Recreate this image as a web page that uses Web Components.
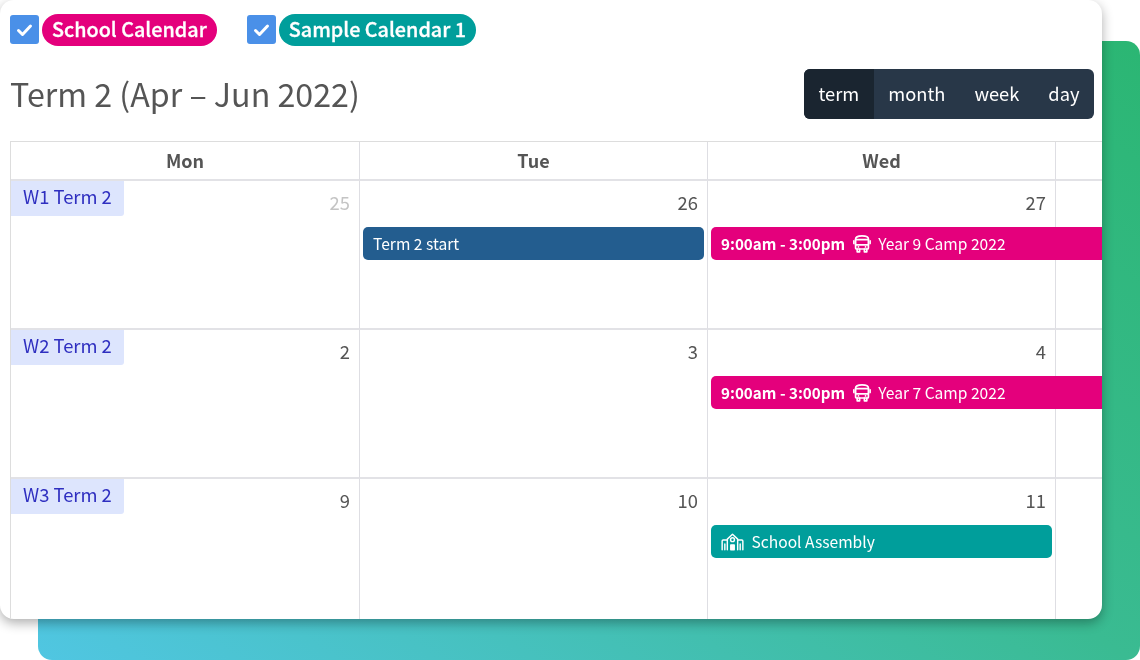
<!DOCTYPE html>
<html>
<head>
<meta charset="utf-8">
<title>Term calendar</title>
<style>
  html, body { margin: 0; background: #fff; overflow: hidden; }
  body { font-family: "Noto Sans CJK SC", "Open Sans", sans-serif; color: #555; }
</style>
</head>
<body>
<term-stage>
  <cal-card>
    <legend-item slot="legend" color="#e4007c">School Calendar</legend-item>
    <legend-item slot="legend" color="#009e9b">Sample Calendar 1</legend-item>
    <span slot="title">Term 2 (Apr – Jun 2022)</span>
    <view-switch slot="views" active="term" views="term,month,week,day"></view-switch>
    <cal-grid slot="grid">
      <cal-head>Mon</cal-head><cal-head>Tue</cal-head><cal-head>Wed</cal-head><cal-head></cal-head>

      <cal-day num="25" muted week="W1 Term 2"></cal-day>
      <cal-day num="26"><cal-event color="#235d8f">Term 2 start</cal-event></cal-day>
      <cal-day num="27"><cal-event color="#e4007c" time="9:00am - 3:00pm" icon="bus" open>Year 9 Camp 2022</cal-event></cal-day>
      <cal-day></cal-day>

      <cal-day num="2" week="W2 Term 2"></cal-day>
      <cal-day num="3"></cal-day>
      <cal-day num="4"><cal-event color="#e4007c" time="9:00am - 3:00pm" icon="bus" open>Year 7 Camp 2022</cal-event></cal-day>
      <cal-day></cal-day>

      <cal-day num="9" week="W3 Term 2"></cal-day>
      <cal-day num="10"></cal-day>
      <cal-day num="11"><cal-event color="#009e9b" icon="school">School Assembly</cal-event></cal-day>
      <cal-day></cal-day>
    </cal-grid>
  </cal-card>
</term-stage>

<script>
const ICONS = {
  bus: `<svg width="18" height="18" viewBox="0 0 18 18" fill="none" stroke="currentColor" stroke-width="1.7" stroke-linejoin="round" stroke-linecap="round">
    <path d="M2.600 4C2.600 2 5.400 .9 9 .9s6.400 1.100 6.400 3.100v9a1 1 0 0 1-1 1H3.600a1 1 0 0 1-1-1z"/>
    <path d="M2.600 4.600h12.800M2.600 9.800h12.800M.9 5.800v2.600M17.100 5.800v2.600M4.200 14v2.800h2.400V14M11.400 14v2.800h2.400V14M5.400 11.900h.1M12.500 11.900h.1"/>
  </svg>`,
  school: `<svg width="23" height="18" viewBox="0 0 24 18" fill="none" stroke="currentColor" stroke-width="1.500" stroke-linejoin="round" stroke-linecap="round">
    <path d="M6.600 17V6L12 1l5.400 5v11"/>
    <path d="M6.600 7H2.200a1 1 0 0 0-1 1v9M17.400 7h4.400a1 1 0 0 1 1 1v9"/>
    <circle cx="12" cy="6.600" r="2"/>
    <path d="M10.200 17v-5h3.600v5z" fill="currentColor"/>
    <path d="M4 11v6M20 11v6"/>
  </svg>`
};

class TermStage extends HTMLElement {
  constructor() {
    super();
    this.attachShadow({ mode: "open" }).innerHTML = `
    <style>
      :host { display: grid; width: 1140px; height: 660px; }
      .panel {
        grid-area: 1 / 1;
        margin: 41px 0 0 38px;
        border-radius: 14px;
        background: linear-gradient(35deg, #50c6e2 0%, #3abb92 55%, #2bb673 100%);
      }
      .front { grid-area: 1 / 1; margin: 0 38px 41px 0; min-width: 0; min-height: 0; display: grid; }
    </style>
    <div class="panel"></div>
    <div class="front"><slot></slot></div>`;
  }
}

class CalCard extends HTMLElement {
  constructor() {
    super();
    this.attachShadow({ mode: "open" }).innerHTML = `
    <style>
      :host {
        display: flex;
        flex-direction: column;
        background: #fff;
        border-radius: 14px;
        box-shadow: 0 4px 12px rgba(0, 0, 0, .32);
        overflow: hidden;
        will-change: transform;
      }
      .legend { display: flex; gap: 30px; padding: 14px 0 0 10px; height: 32px; }
      .bar {
        display: flex;
        justify-content: space-between;
        align-items: center;
        height: 50px;
        margin-top: 23px;
        padding: 0 8px 0 10px;
        font-size: 32.2px;
        line-height: 46px;
        color: #555;
      }
      ::slotted(span) { margin-top: -2px; }
      .grid-wrap { margin: 22px 0 0 10px; flex: 1; min-height: 0; }
    </style>
    <div class="legend"><slot name="legend"></slot></div>
    <div class="bar"><slot name="title"></slot><slot name="views"></slot></div>
    <div class="grid-wrap"><slot name="grid"></slot></div>`;
  }
}

class LegendItem extends HTMLElement {
  constructor() {
    super();
    const color = this.getAttribute("color");
    this.attachShadow({ mode: "open" }).innerHTML = `
    <style>
      :host { display: flex; gap: 3px; align-items: center; }
      .check {
        width: 29px; height: 29px; margin-bottom: 1px;
        border-radius: 3px;
        background: #4a90e8;
        display: grid; place-items: center;
      }
      .pill {
        height: 32px;
        padding: 0 10px;
        border-radius: 16px;
        background: ${color};
        color: #fff;
        font-size: 19.8px;
        font-weight: 500;
        -webkit-text-stroke: .3px #fff;
        line-height: 30px;
        white-space: nowrap;
      }
    </style>
    <span class="check">
      <svg width="17" height="14" viewBox="0 0 17 14" fill="none" stroke="#fff" stroke-width="3" stroke-linecap="round" stroke-linejoin="round"><path d="M2.500 7.500 6.500 11.500 14.500 3"/></svg>
    </span>
    <span class="pill"><slot></slot></span>`;
  }
}

class ViewSwitch extends HTMLElement {
  constructor() {
    super();
    const active = this.getAttribute("active");
    const buttons = this.getAttribute("views").split(",")
      .map(v => `<span class="${v === active ? "on" : ""}">${v}</span>`).join("");
    this.attachShadow({ mode: "open" }).innerHTML = `
    <style>
      :host { display: flex; }
      .group {
        display: flex;
        height: 50px;
        border-radius: 6px;
        overflow: hidden;
        background: #283748;
        color: #fff;
        font-size: 18.3px;
        line-height: 48px;
      }
      span { padding: 0 14.5px; }
      .on { background: #1a2530; }
    </style>
    <div class="group">${buttons}</div>`;
  }
}

class CalGrid extends HTMLElement {
  constructor() {
    super();
    this.attachShadow({ mode: "open" }).innerHTML = `
    <style>
      :host {
        display: grid;
        grid-template-columns: 349px 348px 348px 348px;
        grid-template-rows: 39px 149px 149px 140px;
        border-left: 1px solid #ddd;
        border-top: 1px solid #ddd;
      }
    </style>
    <slot></slot>`;
  }
}

class CalHead extends HTMLElement {
  constructor() {
    super();
    this.attachShadow({ mode: "open" }).innerHTML = `
    <style>
      :host {
        display: block;
        box-sizing: border-box;
        border-right: 1px solid #dedee3;
        border-bottom: 2px solid #e2e2e6;
        text-align: center;
        font-size: 18px;
        font-weight: 700;
        line-height: 36px;
        color: #555;
      }
    </style>
    <slot></slot>`;
  }
}

class CalDay extends HTMLElement {
  constructor() {
    super();
    const num = this.getAttribute("num") || "";
    const week = this.getAttribute("week");
    this.attachShadow({ mode: "open" }).innerHTML = `
    <style>
      :host {
        display: block;
        position: relative;
        box-sizing: border-box;
        border-right: 1px solid #dedee3;
        border-bottom: 2px solid #e2e2e6;
      }
      :host(:nth-last-child(-n+4)) { border-bottom: 0; }
      .num {
        height: 46px;
        padding: 9px 9px 0 0;
        box-sizing: border-box;
        text-align: right;
        font-size: 18.4px;
        line-height: 25px;
        color: ${this.hasAttribute("muted") ? "#c4c4c4" : "#555"};
      }
      .week {
        position: absolute;
        left: 0;
        top: 0;
        width: 113px;
        height: 35px;
        box-sizing: border-box;
        padding-left: 12px;
        border-bottom-right-radius: 3px;
        background: #dde5fd;
        color: #2f2fc0;
        font-size: 18.4px;
        line-height: 31px;
      }
    </style>
    ${week ? `<div class="week">${week}</div>` : ""}
    <div class="num">${num}</div>
    <slot></slot>`;
  }
}

class CalEvent extends HTMLElement {
  constructor() {
    super();
    const time = this.getAttribute("time");
    const icon = this.getAttribute("icon");
    this.attachShadow({ mode: "open" }).innerHTML = `
    <style>
      :host {
        display: flex;
        align-items: center;
        gap: 7.5px;
        height: 33px;
        box-sizing: border-box;
        margin: 0 3px;
        padding: 0 10px;
        border-radius: 5px;
        background: ${this.getAttribute("color")};
        color: #fff;
        font-size: 15.6px;
        line-height: 33px;
        white-space: nowrap;
      }
      :host([open]) { margin-right: -60px; border-radius: 5px 0 0 5px; }
      b { font-weight: 700; font-size: 15.2px; }
      svg { display: block; }
    </style>
    ${time ? `<b>${time}</b>` : ""}
    ${icon ? ICONS[icon] : ""}
    <span><slot></slot></span>`;
  }
}

customElements.define("term-stage", TermStage);
customElements.define("cal-card", CalCard);
customElements.define("legend-item", LegendItem);
customElements.define("view-switch", ViewSwitch);
customElements.define("cal-grid", CalGrid);
customElements.define("cal-head", CalHead);
customElements.define("cal-day", CalDay);
customElements.define("cal-event", CalEvent);
</script>
</body>
</html>
